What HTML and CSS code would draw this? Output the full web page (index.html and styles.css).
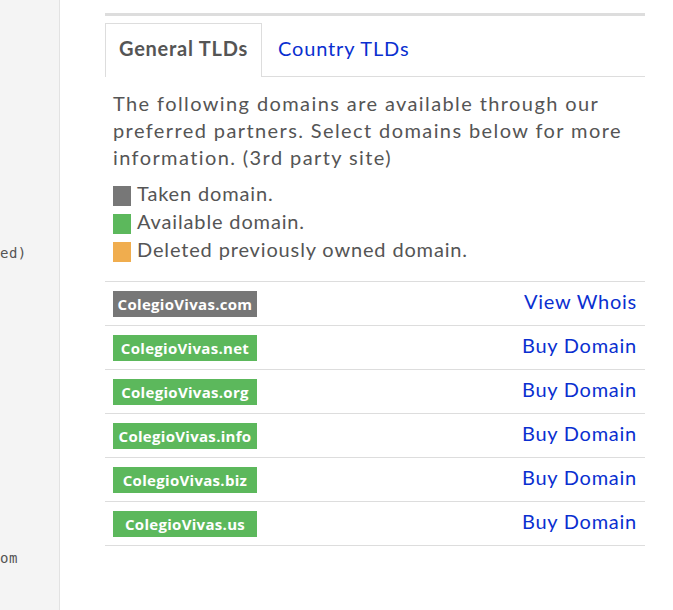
FILE: index.html
```html
<!DOCTYPE html>
<html lang="en">
<head>
<meta charset="utf-8">
<title>Domains</title>
<link rel="stylesheet" href="styles.css">
</head>
<body>
<div class="page">
  <aside class="sidebar">
    <div class="frag frag-a">ed)</div>
    <div class="frag frag-b">om</div>
  </aside>
  <main class="content">
    <div class="topbar"></div>
    <ul class="tabs">
      <li class="tab active">General TLDs</li>
      <li class="tab"><a href="#">Country TLDs</a></li>
    </ul>
    <p class="intro">The following domains are available through our preferred partners. Select domains below for more information. (3rd party site)</p>
    <ul class="legend">
      <li><span class="swatch taken"></span>Taken domain.</li>
      <li><span class="swatch available"></span>Available domain.</li>
      <li><span class="swatch deleted"></span>Deleted previously owned domain.</li>
    </ul>
    <div class="domains">
      <div class="row"><span class="badge taken">ColegioVivas.com</span><a class="action" href="#">View Whois</a></div>
      <div class="row"><span class="badge available">ColegioVivas.net</span><a class="action" href="#">Buy Domain</a></div>
      <div class="row"><span class="badge available">ColegioVivas.org</span><a class="action" href="#">Buy Domain</a></div>
      <div class="row"><span class="badge available">ColegioVivas.info</span><a class="action" href="#">Buy Domain</a></div>
      <div class="row"><span class="badge available">ColegioVivas.biz</span><a class="action" href="#">Buy Domain</a></div>
      <div class="row"><span class="badge available">ColegioVivas.us</span><a class="action" href="#">Buy Domain</a></div>
    </div>
  </main>
</div>
</body>
</html>
```

FILE: styles.css
```css
html, body {
  margin: 0;
  padding: 0;
  background: #fff;
}
.page {
  display: flex;
  min-height: 610px;
  font-family: Lato, "Liberation Sans", sans-serif;
  color: #555;
}
.sidebar {
  width: 59px;
  flex: none;
  background: #f4f4f4;
  border-right: 1px solid #e2e2e2;
  overflow: hidden;
  padding-top: 243px;
}
.frag {
  font-family: "DejaVu Sans Mono", monospace;
  font-size: 14px;
  line-height: 20px;
  color: #555;
  letter-spacing: 0.5px;
}
.frag-b {
  margin-top: 285px;
}
.content {
  width: 540px;
  margin-left: 45px;
}
.topbar {
  margin-top: 13px;
  height: 3px;
  background: #ddd;
}
.tabs {
  list-style: none;
  margin: 7px 0 0;
  padding: 0;
  display: flex;
  border-bottom: 1px solid #ddd;
}
.tab {
  font-size: 20px;
  line-height: 24px;
  height: 24px;
  padding: 12px 13px 17px;
  border: 1px solid transparent;
  border-bottom: none;
  margin-bottom: -1px;
  letter-spacing: 0.85px;
}
.tab.active {
  font-weight: bold;
  letter-spacing: 0.75px;
  border-color: #ddd;
  background: #fff;
}
.tab a {
  color: #0a2fd0;
  text-decoration: none;
  margin-left: 2px;
}
.intro {
  margin: 13px 0 0;
  padding: 0 8px;
  font-size: 20px;
  line-height: 27px;
  letter-spacing: 1.4px;
}
.legend {
  list-style: none;
  margin: 8px 0 0;
  padding: 0 8px;
  font-size: 20px;
  line-height: 28px;
  letter-spacing: 0.85px;
}
.legend li {
  display: flex;
  align-items: flex-start;
}
.swatch {
  width: 18px;
  height: 20px;
  margin-top: 7px;
  margin-right: 6px;
  flex: none;
}
.taken { background: #777; }
.available { background: #5cb85c; }
.deleted { background: #f0ad4e; }
.domains {
  margin-top: 18px;
  border-bottom: 1px solid #ddd;
}
.row {
  display: flex;
  justify-content: space-between;
  align-items: center;
  height: 43px;
  padding: 0 8px;
  border-top: 1px solid #ddd;
}
.badge {
  display: block;
  width: 144px;
  height: 26px;
  line-height: 26px;
  text-align: center;
  color: #fff;
  font-family: "Open Sans", sans-serif;
  font-weight: bold;
  font-size: 15px;
  letter-spacing: 0.3px;
}
.action {
  font-size: 20px;
  line-height: 24px;
  padding-bottom: 5px;
  letter-spacing: 0.75px;
  color: #0a2fd0;
  text-decoration: none;
}
```
